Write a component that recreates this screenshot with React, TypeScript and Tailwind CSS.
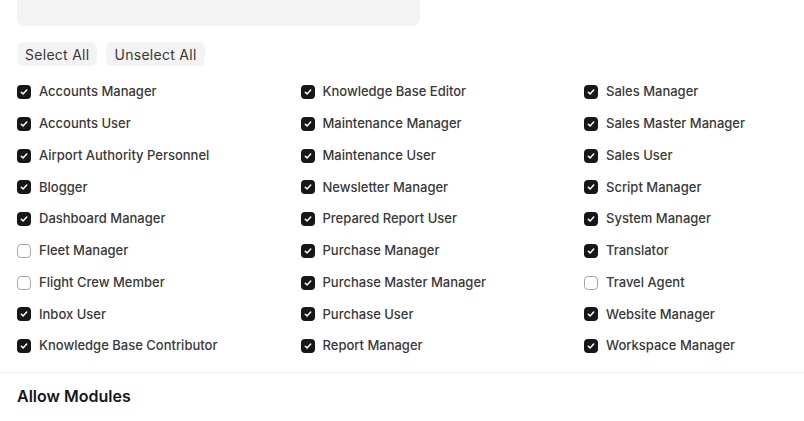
import { useState } from 'react'

const roles: [string, boolean][] = [
  ['Accounts Manager', true],
  ['Knowledge Base Editor', true],
  ['Sales Manager', true],
  ['Accounts User', true],
  ['Maintenance Manager', true],
  ['Sales Master Manager', true],
  ['Airport Authority Personnel', true],
  ['Maintenance User', true],
  ['Sales User', true],
  ['Blogger', true],
  ['Newsletter Manager', true],
  ['Script Manager', true],
  ['Dashboard Manager', true],
  ['Prepared Report User', true],
  ['System Manager', true],
  ['Fleet Manager', false],
  ['Purchase Manager', true],
  ['Translator', true],
  ['Flight Crew Member', false],
  ['Purchase Master Manager', true],
  ['Travel Agent', false],
  ['Inbox User', true],
  ['Purchase User', true],
  ['Website Manager', true],
  ['Knowledge Base Contributor', true],
  ['Report Manager', true],
  ['Workspace Manager', true],
]

function Checkbox({ checked }: { checked: boolean }) {
  if (!checked) {
    return <span className="w-[14px] h-[14px] rounded-[4px] border border-[#a6a6a6] bg-white shrink-0" />
  }
  return (
    <span className="w-[14px] h-[14px] rounded-[4px] bg-[#171717] flex items-center justify-center shrink-0">
      <svg width="8" height="8" viewBox="0 0 8 8" fill="none">
        <path d="M1.3 4.2 L3.1 5.9 L6.7 2.1" stroke="white" strokeWidth="1.5" strokeLinecap="round" strokeLinejoin="round" />
      </svg>
    </span>
  )
}

export default function App() {
  const [state, setState] = useState(roles)

  return (
    <div className="w-[804px] h-[421px] overflow-hidden bg-white font-['Inter',sans-serif] text-[#383838]">
      <div className="px-[17px]">
        <div className="w-[403px] h-[34px] -mt-[8px] rounded-lg bg-[#f3f3f3]" />
        <div className="flex gap-[9px] mt-[16px]">
          <button
            className="h-6 px-2 rounded-md bg-[#f3f3f3] text-[14px] tracking-[0.02em] text-[#383838]"
            onClick={() => setState(state.map(([n]) => [n, true]))}
          >
            Select All
          </button>
          <button
            className="h-6 px-2 rounded-md bg-[#f3f3f3] text-[14px] tracking-[0.02em] text-[#383838]"
            onClick={() => setState(state.map(([n]) => [n, false]))}
          >
            Unselect All
          </button>
        </div>
        <div className="grid grid-cols-[283.5px_283.5px_1fr] gap-y-[11.75px] mt-[16px]">
          {state.map(([name, checked], i) => (
            <label
              key={name}
              className="flex items-center gap-2 h-5 cursor-pointer"
              onClick={() => setState(state.map((r, j) => (j === i ? [r[0], !r[1]] : r)))}
            >
              <Checkbox checked={checked} />
              <span className="text-[13px] font-medium text-[#383838] whitespace-nowrap">{name}</span>
            </label>
          ))}
        </div>
      </div>
      <div className="border-t border-[#ededed] mt-[16px]" />
      <div className="px-[17px] pt-[11px]">
        <h3 className="text-[16px] font-semibold text-[#171717]">Allow Modules</h3>
      </div>
    </div>
  )
}
